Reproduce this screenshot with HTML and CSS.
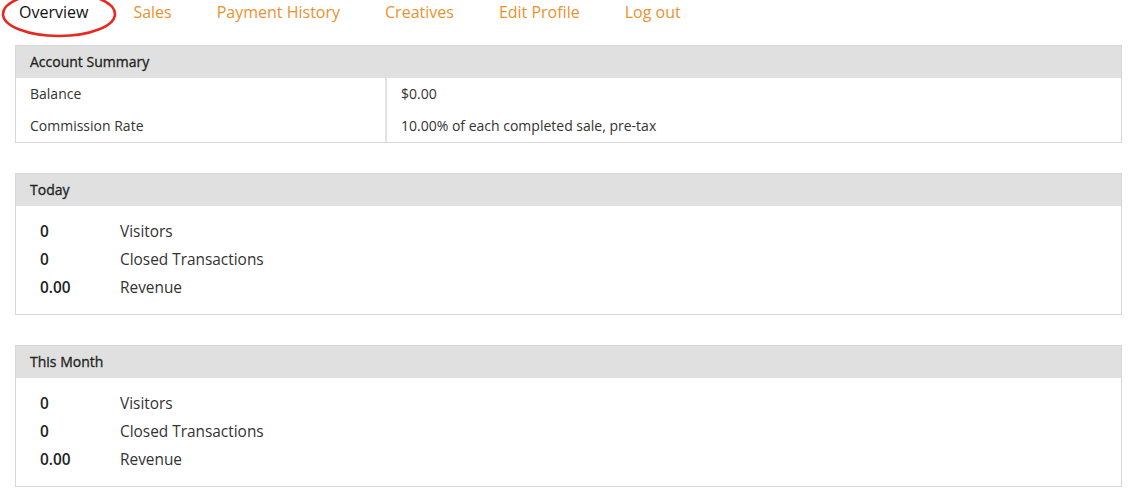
FILE: index.html
```html
<!DOCTYPE html>
<html>
<head>
<meta charset="utf-8">
<link rel="stylesheet" href="styles.css">
</head>
<body>
<nav class="nav">
  <a class="nav-item active" href="#">Overview</a>
  <a class="nav-item" href="#">Sales</a>
  <a class="nav-item" href="#">Payment History</a>
  <a class="nav-item" href="#">Creatives</a>
  <a class="nav-item" href="#">Edit Profile</a>
  <a class="nav-item" href="#">Log out</a>
  <svg class="circle" width="130" height="44" viewBox="0 0 130 44"><ellipse cx="59" cy="14" rx="56" ry="22" fill="none" stroke="#e8281e" stroke-width="2.6"/></svg>
</nav>

<main class="content">
  <section class="panel">
    <div class="panel-head">Account Summary</div>
    <div class="summary">
      <div class="cell label">Balance</div>
      <div class="cell value">$0.00</div>
      <div class="cell label">Commission Rate</div>
      <div class="cell value">10.00% of each completed sale, pre-tax</div>
    </div>
  </section>

  <section class="panel">
    <div class="panel-head">Today</div>
    <div class="stats">
      <div class="stat"><span class="num">0</span><span class="lbl">Visitors</span></div>
      <div class="stat"><span class="num">0</span><span class="lbl">Closed Transactions</span></div>
      <div class="stat"><span class="num">0.00</span><span class="lbl">Revenue</span></div>
    </div>
  </section>

  <section class="panel">
    <div class="panel-head">This Month</div>
    <div class="stats">
      <div class="stat"><span class="num">0</span><span class="lbl">Visitors</span></div>
      <div class="stat"><span class="num">0</span><span class="lbl">Closed Transactions</span></div>
      <div class="stat"><span class="num">0.00</span><span class="lbl">Revenue</span></div>
    </div>
  </section>
</main>
</body>
</html>
```

FILE: styles.css
```css
* { box-sizing: border-box; }
html, body { margin: 0; padding: 0; background: #fff; }
body {
  font-family: "Open Sans", "Liberation Sans", sans-serif;
  color: #333;
  width: 1132px;
  height: 494px;
  overflow: hidden;
}
.nav {
  position: relative;
  display: flex;
  gap: 45px;
  padding: 1px 0 0 19px;
  height: 45px;
}
.nav-item {
  font-size: 16px;
  line-height: 22px;
  color: #ea922f;
  text-decoration: none;
}
.nav-item.active { color: #111; }
.circle {
  position: absolute;
  left: 0;
  top: 0;
  pointer-events: none;
}
.content {
  margin-left: 15px;
  width: 1107px;
  display: flex;
  flex-direction: column;
  gap: 30px;
}
.panel {
  border: 1px solid #d6d6d6;
  background: #fff;
}
.panel-head {
  background: #e0e0e0;
  height: 32px;
  line-height: 32px;
  padding-left: 14px;
  font-size: 14px;
  font-weight: 400;
  color: #222;
  -webkit-text-stroke: 0.3px #222;
}
.summary {
  display: grid;
  grid-template-columns: 371px 1fr;
}
.cell {
  height: 32px;
  line-height: 32px;
  font-size: 14px;
  color: #333;
}
.cell.label { padding-left: 14px; border-right: 2px solid #e2e2e2; }
.cell.value { padding-left: 14px; }
.stats {
  padding: 11.5px 0 12.5px 24px;
}
.stat {
  display: flex;
  height: 28px;
  line-height: 28px;
  font-size: 15.4px;
}
.num {
  width: 80px;
  font-weight: 600;
  color: #222;
}
.lbl { color: #333; }
```
